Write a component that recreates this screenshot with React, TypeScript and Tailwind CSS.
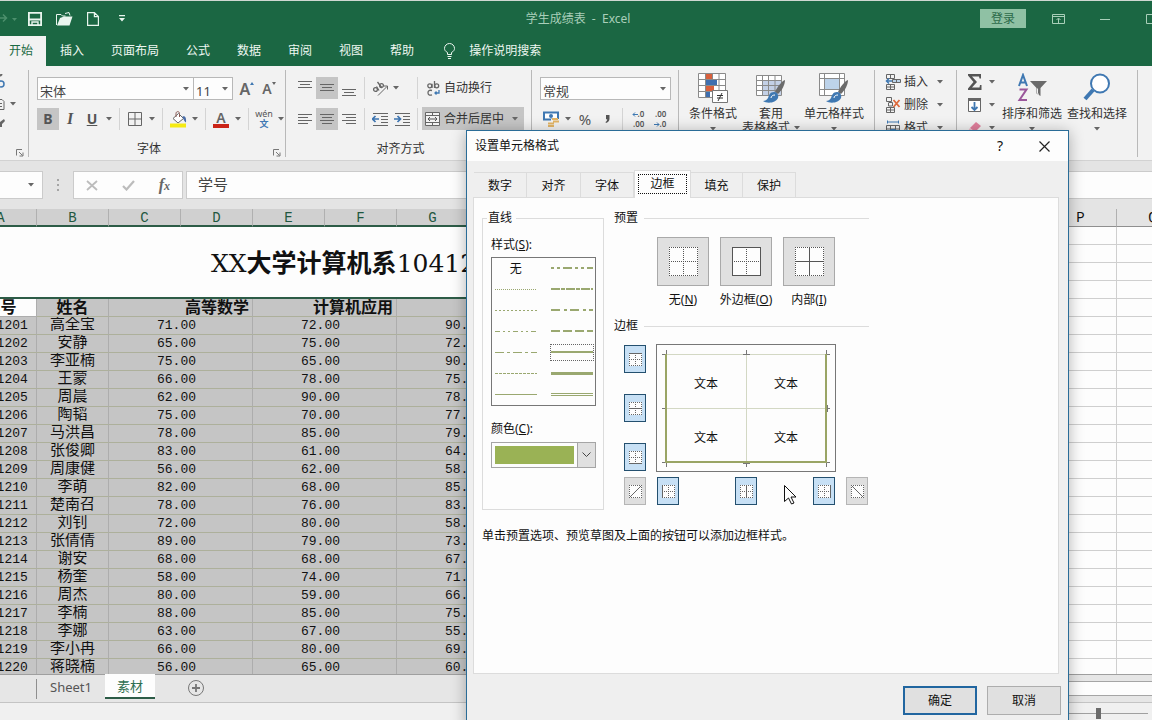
import React from 'react';

const UI_FONT = "font-['Noto_Sans','Noto_Sans_CJK_SC',sans-serif]";

const menuTabs = ['插入', '页面布局', '公式', '数据', '审阅', '视图', '帮助'];
const columns = ['A', 'B', 'C', 'D', 'E', 'F', 'G'];

const students = [
  ['1041201', '高全宝', '71.00', '72.00', '90.00'],
  ['1041202', '安静', '65.00', '75.00', '72.00'],
  ['1041203', '李亚楠', '75.00', '65.00', '90.00'],
  ['1041204', '王蒙', '66.00', '78.00', '75.00'],
  ['1041205', '周晨', '62.00', '90.00', '78.00'],
  ['1041206', '陶韬', '75.00', '70.00', '77.00'],
  ['1041207', '马洪昌', '78.00', '85.00', '79.00'],
  ['1041208', '张俊卿', '83.00', '61.00', '64.00'],
  ['1041209', '周康健', '56.00', '62.00', '58.00'],
  ['1041210', '李萌', '82.00', '68.00', '85.00'],
  ['1041211', '楚南召', '78.00', '76.00', '83.00'],
  ['1041212', '刘钊', '72.00', '80.00', '58.00'],
  ['1041213', '张倩倩', '89.00', '79.00', '73.00'],
  ['1041214', '谢安', '68.00', '68.00', '67.00'],
  ['1041215', '杨奎', '58.00', '74.00', '71.00'],
  ['1041216', '周杰', '80.00', '59.00', '66.00'],
  ['1041217', '李楠', '88.00', '85.00', '75.00'],
  ['1041218', '李娜', '63.00', '67.00', '55.00'],
  ['1041219', '李小冉', '66.00', '80.00', '69.00'],
  ['1041220', '蒋晓楠', '56.00', '65.00', '60.00'],
];

function Caret() {
  return (
    <svg width="6" height="4" viewBox="0 0 6 4" className="shrink-0">
      <path d="M0 0h6L3 3.5z" fill="#666" />
    </svg>
  );
}

function CaretButton({ label }: { label: string }) {
  return (
    <button aria-label={label} className="flex h-[22px] w-3 shrink-0 items-center justify-center">
      <Caret />
    </button>
  );
}

function Tool({ label, active, children }: { label: string; active?: boolean; children: React.ReactNode }) {
  return (
    <button
      aria-label={label}
      className={`flex h-[22px] w-[22px] shrink-0 items-center justify-center ${active ? 'bg-[#c5c5c5]' : ''}`}
    >
      {children}
    </button>
  );
}

function Divider() {
  return <div className="mx-1 h-[22px] w-px shrink-0 bg-[#d4d4d4]" />;
}

function Combo({ label, value, className }: { label: string; value: string; className: string }) {
  return (
    <div className={`relative h-[23px] shrink-0 border border-[#b8b8b8] bg-[#fdfdfd] ${className}`}>
      <select aria-label={label} className="h-full w-full appearance-none bg-transparent pb-1 pl-0.5 text-[13px] leading-4 text-[#444] outline-none">
        <option>{value}</option>
      </select>
      <span className="pointer-events-none absolute inset-y-0 right-1 flex items-center">
        <Caret />
      </span>
    </div>
  );
}

function Group({ label, launcher, className, children }: {
  label?: string;
  launcher?: boolean;
  className: string;
  children: React.ReactNode;
}) {
  return (
    <div className={`flex shrink-0 flex-col border-r border-[#b9b9b9] ${className}`}>
      {children}
      <div className="relative mt-auto h-4 pr-6 text-center text-xs leading-4 text-[#333]">
        {label}
        {launcher && (
          <button aria-label="更多设置" className="absolute right-1 bottom-0">
            <svg width="8" height="8" viewBox="0 0 8 8" fill="none" stroke="#777">
              <path d="M.5 6.5V.5H6M3 3l3.5 3.5M7 3.5V7H3.5" />
            </svg>
          </button>
        )}
      </div>
    </div>
  );
}

// Horizontal strokes for the alignment buttons, [x, y, width] each
function Lines({ rows }: { rows: number[][] }) {
  return (
    <svg width="16" height="16" viewBox="0 0 16 16" fill="#666">
      {rows.map(([x, y, w]) => (
        <rect key={y} x={x} y={y} width={w} height="1" />
      ))}
    </svg>
  );
}

function Indent({ right }: { right?: boolean }) {
  return (
    <svg width="17" height="14" viewBox="0 0 17 14" fill="none">
      <path d="M1 1.5h15M9 4.5h7M9 7.5h7M9 10.5h7M1 13.5h15" stroke="#666" />
      <path d={right ? 'M0 7h6M3.5 4l3 3-3 3' : 'M7 7H1M3.5 4l-3 3 3 3'} stroke="#3d74b0" strokeWidth="1.7" />
    </svg>
  );
}

function BigTool({ lines, caret = true, className, children }: {
  lines: string[];
  caret?: boolean;
  className: string;
  children: React.ReactNode;
}) {
  return (
    <button className={`flex shrink-0 flex-col items-center text-xs leading-[14px] whitespace-nowrap text-[#333] ${className}`}>
      <span className="mb-1 block h-[30px]">{children}</span>
      {lines.map((line, i) => (
        <span key={line} className="flex items-center gap-1">
          {line}
          {i === 1 && <Caret />}
        </span>
      ))}
      {caret && <span className="mt-1.5"><Caret /></span>}
    </button>
  );
}

function BrushMark() {
  return (
    <>
      <path d="M29 7c-3 1-8 7-10 12l3 2c4-4 7-9 7-14z" fill="#6b6b6b" />
      <path d="M18 19c-4 0-5 3-6 6-1 2-3 3-5 3 4 3 13 2 15-3 1-3-1-6-4-6z" fill="#3f78b2" />
      <path d="M15 25c0-2 2-3 4-3" stroke="#fff" fill="none" />
    </>
  );
}

function CellTool({ label, kind }: { label: string; kind: 'insert' | 'delete' | 'format' }) {
  return (
    <div className="flex h-[23px] items-center">
      <button className="flex items-center gap-[3px] text-xs leading-4 text-[#333]">
        <svg width="16" height="16" viewBox="0 0 16 16" fill="none">
          {kind === 'insert' && (
            <>
              <path d="M1.5.5h8v4h-8zM5.5.5v4M1.5 10.5h8v5h-8zM5.5 10.5v5M1.5 13h8" stroke="#666" />
              <path d="M7.5 5.5h8v3h-8zM11.5 5.5v3" stroke="#666" fill="#bcd4ea" />
              <path d="M7 7H2M4 4.5L1.5 7 4 9.5" stroke="#3f78b2" strokeWidth="1.5" />
            </>
          )}
          {kind === 'delete' && (
            <>
              <path d="M1.5.5h5v4h-5zM1.5 10.5h8v5h-8zM5.5 10.5v5M1.5 13h8M3.5 6v3h4V5.5h-4" stroke="#666" />
              <path d="M8.5 3l6 7M14.5 3l-6 7" stroke="#dd6b3d" strokeWidth="1.8" />
            </>
          )}
          {kind === 'format' && (
            <>
              <path d="M1.5 5.5h13v10h-13zM1.5 9h13M1.5 12.5h13M5.5 5.5v10M10.5 5.5v10" stroke="#666" />
              <path d="M5.5 9h5v3.5h-5z" fill="#3f78b2" />
              <path d="M2.5 2h11M2.5.5v3M13.5.5v3" stroke="#3f78b2" />
            </>
          )}
        </svg>
        {label}
      </button>
      <span className="ml-1.5 flex"><CaretButton label={`${label}选项`} /></span>
    </div>
  );
}

function TitleBar() {
  return (
    <header className="flex h-9 items-center overflow-hidden border-t border-[#cfd8d2] text-xs text-[#a9cfb9]">
      <div className="flex flex-1 items-center">
        <svg width="18" height="14" viewBox="0 0 18 14" className="mr-[10px]">
          <path d="M0 6h6M3 2.5L6.5 6 3 9.5" fill="none" stroke="#4c8f6c" strokeWidth="1.5" />
          <path d="M12 6h5l-2.5 3z" fill="#4c8f6c" />
        </svg>
        <button aria-label="保存">
          <svg width="14" height="14" viewBox="0 0 14 14" fill="none" stroke="#e9f5ee" strokeWidth="1.8">
            <path d="M.9.9h12.2v12.2H.9zM1 7.5h12" />
            <path d="M4 13V10h6v3" strokeWidth="1.4" />
          </svg>
        </button>
        <button aria-label="打开" className="ml-[14px]">
          <svg width="17" height="14" viewBox="0 0 17 14" fill="#e9f5ee">
            <path d="M.5 13V2.5H5l1.500 1.500h3M9 1.500l4-1 1 3" fill="none" stroke="#e9f5ee" />
            <path d="M1 13.500L4 6l4-1.500h8.500L13.500 13.500z" />
          </svg>
        </button>
        <button aria-label="新建" className="ml-[14px]">
          <svg width="12" height="14" viewBox="0 0 12 14" fill="none" stroke="#e9f5ee" strokeWidth="1.2">
            <path d="M.6.6h6.800l4 4v8.800H.6zM7.400.6v4h4" />
          </svg>
        </button>
        <button aria-label="自定义快速访问工具栏" className="ml-5">
          <svg width="6" height="7" viewBox="0 0 6 7" fill="#e9f5ee">
            <path d="M0 0h6v1.300H0zM0 3h6L3 6.500z" />
          </svg>
        </button>
      </div>
      <h1 className="whitespace-pre">学生成绩表  -  Excel</h1>
      <div className="-mr-1 flex flex-1 items-center justify-end">
        <button className="h-[19px] w-[46px] bg-[#8fc1a4] text-xs leading-[19px] text-[#2c6a4a]">登录</button>
        <button aria-label="功能区显示选项" className="ml-[26px]">
          <svg width="13" height="10" viewBox="0 0 13 10" fill="none" stroke="#a9cfb9">
            <path d="M.5.5h12v9H.5zM.5 2.500h12M6.500 9V4.500M4.500 6l2-2 2 2" />
          </svg>
        </button>
        <button aria-label="最小化" className="ml-[35px]">
          <svg width="10" height="10" viewBox="0 0 10 10"><path d="M0 5h10v1H0z" fill="#a9cfb9" /></svg>
        </button>
        <button aria-label="最大化" className="ml-9">
          <svg width="10" height="10" viewBox="0 0 10 10"><path d="M.5.5h9v9h-9z" fill="none" stroke="#a9cfb9" /></svg>
        </button>
      </div>
    </header>
  );
}

function MenuBar() {
  return (
    <nav className="flex h-[30px] items-stretch text-xs whitespace-nowrap text-[#eef7f1]">
      <button className="bg-[#f2f2f2] pr-[13px] pl-[9px] text-[#1b6a43]">开始</button>
      <div className="ml-[14px] flex gap-[27px]">
        {menuTabs.map((tab) => (
          <button key={tab}>{tab}</button>
        ))}
      </div>
      <button className="ml-[29px] flex items-center gap-[13px]">
        <svg width="13" height="16" viewBox="0 0 13 16" fill="none" stroke="#eef7f1">
          <path d="M4.5 11.500v-2C2.500 8.500 1.500 7 1.500 5.500a5 5 0 0110 0c0 1.500-1 3-3 4v2zM4.500 13.500h4M5 15.500h3" />
        </svg>
        操作说明搜索
      </button>
    </nav>
  );
}

function Ribbon() {
  return (
    <div className="flex h-[95px] overflow-hidden border-b border-[#d2d2d2] bg-[#f2f2f2] pt-1 pb-[3px] text-[#333]">
      <Group launcher className="w-[29px]">
        <svg width="20" height="56" viewBox="0 0 20 56" fill="none" className="mt-1">
          <path d="M0 2l2-2" stroke="#666" strokeWidth="2" />
          <circle cx="1" cy="10" r="3" stroke="#3f78b2" strokeWidth="1.5" />
          <path d="M0 25.500h2l2 2v8H0M0 29.500h2M0 32.500h2" stroke="#666" />
          <path d="M10 28h6l-3 3.500z" fill="#666" />
          <path d="M0 48l4-3 1 2-3 3v3H0z" fill="#666" />
        </svg>
      </Group>

      <Group label="字体" launcher className="w-[257px] pl-2">
        <div className="mt-[7px] flex items-center">
          <Combo label="字体" value="宋体" className="w-[157px]" />
          <Combo label="字号" value="11" className="-ml-px mr-[3px] w-10" />
          <Tool label="增大字号">
            <span className="text-base leading-4 font-semibold text-[#666]">A</span>
            <svg width="4" height="14" viewBox="0 0 4 14"><path d="M0 3h4L2 0z" fill="#3f78b2" /></svg>
          </Tool>
          <Tool label="减小字号">
            <span className="text-sm leading-4 font-semibold text-[#666]">A</span>
            <svg width="4" height="14" viewBox="0 0 4 14"><path d="M0 0h4L2 3z" fill="#666" /></svg>
          </Tool>
        </div>
        <div className="mt-2 flex items-center">
          <Tool label="加粗" active><b className="text-sm text-[#555]">B</b></Tool>
          <Tool label="倾斜"><i className="font-['Liberation_Serif',serif] text-base font-bold text-[#555]">I</i></Tool>
          <Tool label="下划线"><span className="text-sm font-bold text-[#555] underline">U</span></Tool>
          <CaretButton label="下划线选项" />
          <Divider />
          <Tool label="边框">
            <svg width="14" height="14" viewBox="0 0 14 14" fill="none" stroke="#666">
              <path d="M.5.5h13v13H.5zM7 .5v13M.5 7h13" />
            </svg>
          </Tool>
          <CaretButton label="边框选项" />
          <Divider />
          <Tool label="填充颜色">
            <svg width="17" height="17" viewBox="0 0 17 17" fill="none">
              <path d="M8.500 2.500l5 5L8 12 3 7.500z" fill="#fff" stroke="#666" />
              <path d="M6 6V2.500C6 0 9.500 0 9.500 2.500V6" stroke="#8a5a55" />
              <path d="M12.500 5.500c3-1 4 2 3.500 6-1.500-.5-2-3-3-4z" fill="#4a6da8" />
              <path d="M0 12.500h16v4H0z" fill="#f5ea12" />
            </svg>
          </Tool>
          <CaretButton label="填充颜色选项" />
          <Divider />
          <Tool label="字体颜色">
            <span className="flex flex-col items-center">
              <span className="text-sm leading-[13px] font-semibold text-[#666]">A</span>
              <span className="h-1 w-4 bg-[#cb2417]" />
            </span>
          </Tool>
          <CaretButton label="字体颜色选项" />
          <Divider />
          <Tool label="拼音">
            <span className="flex flex-col items-center leading-[10px]">
              <span className="text-[9px] text-[#555]">wén</span>
              <span className="text-[9px] font-bold text-[#3f78b2]">文</span>
            </span>
          </Tool>
          <CaretButton label="拼音选项" />
        </div>
      </Group>

      <Group label="对齐方式" className="w-[246px] pl-2">
        <div className="mt-[7px] flex items-center">
          <Tool label="顶端对齐"><Lines rows={[[1, 1, 14], [3, 4, 10], [1, 7, 14]]} /></Tool>
          <Tool label="垂直居中" active><Lines rows={[[1, 4, 14], [3, 7, 10], [1, 10, 14]]} /></Tool>
          <Tool label="底端对齐"><Lines rows={[[1, 9, 14], [3, 12, 10], [1, 15, 14]]} /></Tool>
          <Divider />
          <button aria-label="方向" className="flex h-[22px] w-11 items-center gap-1 pl-[3px]">
            <svg width="17" height="15" viewBox="0 0 17 15" fill="none" stroke="#666">
              <circle cx="3.500" cy="8.500" r="1.900" strokeWidth="1.300" />
              <path d="M4.500 5.500l2.500 4M5.500 1l4.500 6" strokeWidth="1.300" />
              <circle cx="9.500" cy="4.500" r="1.900" strokeWidth="1.300" />
              <path d="M6 14.500l9-9M12 5h3.500v3.500" />
            </svg>
            <Caret />
          </button>
          <Divider />
          <button className="flex h-[22px] w-[102px] items-center gap-1 pl-[5px] text-xs">
            <svg width="13" height="15" viewBox="0 0 13 15" fill="none" stroke="#666" strokeWidth="1.3">
              <circle cx="2.800" cy="4.800" r="2" />
              <path d="M5 2.800V7M7.500 0v7" />
              <circle cx="9.700" cy="4.800" r="2" />
              <path d="M5 9.500c-3-.8-4 .5-4 2.200s1 3 4 2.200" />
              <path d="M12 9v3H8M9.500 10.500L8 12l1.500 1.500" stroke="#3f78b2" />
            </svg>
            自动换行
          </button>
        </div>
        <div className="mt-2 flex items-center">
          <Tool label="左对齐"><Lines rows={[[1, 3, 14], [1, 6, 10], [1, 9, 14], [1, 12, 10]]} /></Tool>
          <Tool label="居中" active><Lines rows={[[1, 3, 14], [3, 6, 10], [1, 9, 14], [3, 12, 10]]} /></Tool>
          <Tool label="右对齐"><Lines rows={[[1, 3, 14], [5, 6, 10], [1, 9, 14], [5, 12, 10]]} /></Tool>
          <Divider />
          <Tool label="减少缩进量"><Indent /></Tool>
          <Tool label="增加缩进量"><Indent right /></Tool>
          <Divider />
          <button className="flex h-[23px] w-[102px] items-center gap-1 bg-[#c5c5c5] pl-[3px] text-xs">
            <svg width="15" height="14" viewBox="0 0 15 14" fill="none" stroke="#666">
              <path d="M.5.5h14v13H.5z" fill="#f2f2f2" />
              <path d="M.5 3.500h14M.5 10.500h14M7.500.5v3M7.500 10.500v3" />
              <path d="M3 7h9M5 5L3 7l2 2M10 5l2 2-2 2" stroke="#555" />
            </svg>
            合并后居中
            <span className="ml-1"><Caret /></span>
          </button>
        </div>
      </Group>

      <Group className="w-[147px] pl-2">
        <div className="mt-[7px] flex">
          <Combo label="数字格式" value="常规" className="w-[131px]" />
        </div>
        <div className="mt-2 flex items-center">
          <Tool label="会计数字格式">
            <svg width="17" height="16" viewBox="0 0 17 16" fill="none">
              <path d="M1 1.500h14v7H1z" fill="#fff" stroke="#3f78b2" strokeWidth="2" />
              <circle cx="8" cy="5" r="2" fill="#3f78b2" />
              <path d="M8 9.500h8M10 12h6M5 14.500h8" stroke="#f2f2f2" strokeWidth="3" />
              <path d="M9 8h6M10 10.500h6M5 12.500h6M5 15h6" stroke="#e3b566" strokeWidth="1.800" />
            </svg>
          </Tool>
          <CaretButton label="会计格式选项" />
          <Tool label="百分比"><span className="text-[15px] text-[#555]">%</span></Tool>
          <Tool label="千位分隔">
            <svg width="5" height="8" viewBox="0 0 5 8"><path d="M1 0h3.500v3.500C4.500 5.500 3.500 7 1 8l-.5-1c1.200-.8 1.700-1.500 1.700-2.800H1z" fill="#555" /></svg>
          </Tool>
          <Divider />
          <Tool label="增加小数位数">
            <span className="flex flex-col text-right text-[8px] leading-[10px] font-semibold text-[#555]">
              <span className="flex items-center">
                <svg width="6" height="5" viewBox="0 0 6 5"><path d="M6 2.500H1M3 .5l-2 2 2 2" fill="none" stroke="#3f78b2" /></svg>
                .0
              </span>
              <span>.00</span>
            </span>
          </Tool>
          <Tool label="减少小数位数">
            <span className="flex flex-col text-right text-[8px] leading-[10px] font-semibold text-[#555]">
              <span>.00</span>
              <span className="flex items-center">
                <svg width="6" height="5" viewBox="0 0 6 5"><path d="M0 2.500h5M3 .5l2 2-2 2" fill="none" stroke="#3f78b2" /></svg>
                .0
              </span>
            </span>
          </Tool>
        </div>
      </Group>

      <Group className="w-[196px] pl-2">
        <div className="mt-[3px] flex h-[62px] items-start">
          <BigTool lines={['条件格式']} className="w-[52px]">
            <svg width="30" height="30" viewBox="0 0 30 30" fill="none">
              <path d="M.5.5h27v24H.5z" fill="#fff" />
              <path d="M.5.5h27v24H.5zM.5 6.500h27M.5 12.500h27M.5 18.500h27M7.500.5v24M14.500.5v24M21 .5v24" stroke="#8a8a8a" />
              <path d="M8 1h6v5H8zM8 13h8v5H8z" fill="#d9603c" />
              <path d="M8 7h11v5H8zM8 19h4v5H8z" fill="#3f6faf" />
              <path d="M14.500 17.500h15v12h-15z" fill="#fff" stroke="#777" />
              <path d="M19 22.500h6M19 25h6M24 20l-4 8" stroke="#333" />
            </svg>
          </BigTool>
          <BigTool lines={['套用', '表格格式']} caret={false} className="w-[64px]">
            <svg width="30" height="30" viewBox="0 0 30 30" fill="none">
              <path d="M.5 2.500h25v20H.5z" fill="#fff" />
              <path d="M7 7h18v15H7z" fill="#c3d0e6" />
              <path d="M.5 2.500h25v20H.5zM.5 7.500h25M.5 12.500h25M.5 17.500h25M6.500 2.500v20M12.500 2.500v20M19 2.500v20" stroke="#8a8a8a" />
              <BrushMark />
            </svg>
          </BigTool>
          <BigTool lines={['单元格样式']} className="w-[62px]">
            <svg width="30" height="30" viewBox="0 0 30 30" fill="none">
              <path d="M.5.5h25v22H.5z" fill="#fff" stroke="#8a8a8a" />
              <path d="M.5 5.500h25M.5 16.500h25M5.500.5v22M20.500.5v22" stroke="#8a8a8a" />
              <path d="M6 6h14v10H6z" fill="#bdd3ea" />
              <BrushMark />
            </svg>
          </BigTool>
        </div>
      </Group>

      <Group className="w-[82px] pl-[10px]">
        <CellTool label="插入" kind="insert" />
        <CellTool label="删除" kind="delete" />
        <CellTool label="格式" kind="format" />
      </Group>

      <Group className="w-[181px] pl-[10px]">
        <div className="flex">
          <div className="w-[33px]">
            <div className="flex h-[23px] items-center gap-[3px]">
              <svg width="16" height="16" viewBox="0 0 16 16" className="shrink-0">
                <path d="M1 0h13v4.500h-1.500L12 2.500H5l5 5.500-5 5.500h7.500l.5-2.500h1.500v5H1v-1.500L6.500 8 1 1.500z" fill="#555" />
              </svg>
              <CaretButton label="自动求和选项" />
            </div>
            <div className="flex h-[23px] items-center gap-[3px]">
              <svg width="16" height="16" viewBox="0 0 16 16" fill="none" className="shrink-0">
                <path d="M1.500 1.500h12v13h-12z" fill="#fff" stroke="#666" />
                <path d="M1 1h13v3H1z" fill="#666" />
                <path d="M7.500 5v8M4.500 10l3 3 3-3" stroke="#3f78b2" strokeWidth="1.8" />
              </svg>
              <CaretButton label="填充选项" />
            </div>
            <div className="flex h-[23px] items-center gap-[3px]">
              <svg width="16" height="16" viewBox="0 0 16 16" className="shrink-0">
                <path d="M9 2l5 4-6 6-5-4z" fill="#e07f9c" />
                <path d="M3 8l5 4-1 1H3l-2-2z" fill="#f3bccb" />
              </svg>
              <CaretButton label="清除选项" />
            </div>
          </div>
          <div className="mt-[3px] flex h-[62px] items-start">
            <BigTool lines={['排序和筛选']} className="w-16">
              <svg width="30" height="30" viewBox="0 0 30 30" fill="none">
                <path d="M2 13L6 2l4 11M3.500 9.500h5" stroke="#3f78b2" strokeWidth="2" />
                <path d="M2.500 16.500h7L2.500 27H10" stroke="#9a569b" strokeWidth="2" />
                <path d="M13 8h17l-6.500 7v8l-4-2.500V15z" fill="#6b6b6b" />
                <path d="M20.500 15.500v5l1.500 1" stroke="#f2f2f2" />
              </svg>
            </BigTool>
            <BigTool lines={['查找和选择']} className="w-[66px]">
              <svg width="30" height="30" viewBox="0 0 30 30" fill="none" stroke="#3f78b2">
                <path d="M11 17L3 26" strokeWidth="4" />
                <circle cx="18" cy="10.500" r="9" fill="#fff" strokeWidth="2" />
              </svg>
            </BigTool>
          </div>
        </div>
      </Group>
    </div>
  );
}

function FormulaBar() {
  return (
    <div className="flex h-12 items-center bg-[#e4e4e4]">
      <div className="flex h-7 w-[43px] items-center justify-end border border-l-0 border-[#cbcbcb] bg-[#fdfdfd] pr-2">
        <button aria-label="名称框"><Caret /></button>
      </div>
      <svg width="30" height="12" viewBox="0 0 30 12" fill="#a5a5a5">
        <path d="M14 0h2v2h-2zM14 5h2v2h-2zM14 10h2v2h-2z" />
      </svg>
      <div className="flex h-7 w-[110px] items-center justify-around border border-[#cbcbcb] bg-[#fdfdfd]">
        <button aria-label="取消输入">
          <svg width="12" height="11" viewBox="0 0 12 11"><path d="M1 1l10 9M11 1L1 10" stroke="#bcbcbc" strokeWidth="1.8" /></svg>
        </button>
        <button aria-label="输入">
          <svg width="13" height="11" viewBox="0 0 13 11"><path d="M1 6l3.500 3.500L12 1" fill="none" stroke="#bcbcbc" strokeWidth="2.2" /></svg>
        </button>
        <button aria-label="插入函数" className="font-['Liberation_Serif',serif] text-base leading-5 font-bold text-[#666] italic">
          f<span className="text-xs">x</span>
        </button>
      </div>
      <input
        aria-label="编辑栏"
        defaultValue="学号"
        className="ml-[3px] h-7 min-w-0 flex-1 border border-r-0 border-[#cbcbcb] bg-[#fdfdfd] pb-1 pl-[11px] text-[15px] text-[#444] outline-none"
      />
    </div>
  );
}

const cell = 'h-[18px] overflow-hidden border-r border-b border-r-[#adadad] border-b-[#adb09b] bg-[#c5c5c5] p-0 whitespace-nowrap';

function Sheet() {
  return (
    <div className="min-h-0 flex-1 overflow-hidden bg-[#fdfdfd] text-[#111]">
      <div className="-ml-[35px] flex h-[18px] font-['Liberation_Mono',monospace] text-sm leading-[18px]">
        {columns.map((c) => (
          <div key={c} className="w-[72px] shrink-0 border-r border-b-2 border-r-[#b0b0b0] border-b-[#2d5c47] bg-[#d0d0d0] text-center text-[#1f5740]">
            {c}
          </div>
        ))}
        <div className="w-[576px] shrink-0 border-b-2 border-[#2d5c47] bg-[#d0d0d0]" />
        {['P', 'Q'].map((c) => (
          <div key={c} className="w-[72px] shrink-0 border-r border-b border-r-[#b0b0b0] border-b-[#8f8f8f] bg-[#e4e4e4] text-center">
            {c}
          </div>
        ))}
        <div className="flex-1 border-b border-[#8f8f8f] bg-[#e4e4e4]" />
      </div>
      <div className="-ml-[35px] flex items-start">
        <table className="w-[1080px] shrink-0 table-fixed border-separate border-spacing-0 leading-[17px]">
          <thead>
            <tr>
              <th colSpan={15} className="h-[72px] border-b-2 border-[#2d5c47] bg-[#fdfdfd] p-0 pt-1 pl-[246px] text-left font-['DejaVu_Serif','Noto_Sans_CJK_SC',serif] text-[25px] leading-8 font-bold">
                <span className="font-normal">XX</span>大学计算机系<span className="font-normal">10412</span>
              </th>
            </tr>
            <tr className="text-[16px]">
              <th className="h-[18px] border-r border-b border-[#adadad] bg-[#fdfdfd] p-0">学号</th>
              <th className={cell}>姓名</th>
              <th colSpan={2} className={`${cell} pr-[3px] text-right`}>高等数学</th>
              <th colSpan={2} className={`${cell} pr-[3px] text-right`}>计算机应用</th>
              <th colSpan={2} className={cell} />
              <th colSpan={7} className={cell} />
            </tr>
          </thead>
          <tbody className="text-center font-['Liberation_Mono','Noto_Sans_CJK_SC',monospace] text-[13px]">
            {students.map(([id, name, math, app, extra]) => (
              <tr key={id}>
                <td className={cell}>{id}</td>
                <td className={`${cell} text-[15px]`}>{name}</td>
                <td colSpan={2} className={`${cell} pr-2`}>{math}</td>
                <td colSpan={2} className={`${cell} pr-2`}>{app}</td>
                <td colSpan={2} className={`${cell} pr-2`}>{extra}</td>
                <td colSpan={7} className={cell} />
              </tr>
            ))}
          </tbody>
        </table>
        <div className="flex-1">
          {Array.from({ length: 26 }, (_, i) => (
            <div key={i} className="flex h-[18px] border-b border-[#cfcfcf]">
              <div className="w-[72px] shrink-0 border-r border-[#cfcfcf]" />
            </div>
          ))}
        </div>
      </div>
    </div>
  );
}

function SheetTabs() {
  return (
    <div className="flex h-7 shrink-0 items-start border-t border-[#9f9f9f] bg-[#e6e6e6]">
      <div className="mt-1 ml-9 h-5 w-px bg-[#8f8f8f]" />
      <button className="h-6 w-[68px] text-[13px] leading-6 text-[#555]">Sheet1</button>
      <button className="-mt-px h-[25px] w-[50px] border-b-2 border-[#2d5c47] bg-[#fdfdfd] text-[13px] leading-[22px] text-[#2d6e50]">素材</button>
      <button aria-label="新工作表" className="mt-[5px] ml-[33px]">
        <svg width="16" height="16" viewBox="0 0 16 16" fill="none" stroke="#777">
          <circle cx="8" cy="8" r="7.5" />
          <path d="M8 4v8M4 8h8" strokeWidth="1.8" />
        </svg>
      </button>
      <div className="mt-1.5 ml-auto h-[15px] w-1/2 border-y border-[#a5a5a5] bg-[#fdfdfd]" />
    </div>
  );
}

function StatusBar() {
  return (
    <footer className="flex h-[18px] shrink-0 items-center justify-end border-t border-[#c4c4c4] bg-[#f0f0f0] pt-1 pr-1">
      <input
        type="range"
        aria-label="缩放"
        defaultValue={50}
        className="h-3 w-[100px] appearance-none bg-[linear-gradient(#a0a0a0,#a0a0a0)] bg-[length:100%_1px] bg-center bg-no-repeat [&::-webkit-slider-thumb]:h-[11px] [&::-webkit-slider-thumb]:w-[5px] [&::-webkit-slider-thumb]:appearance-none [&::-webkit-slider-thumb]:bg-[#6b6b6b]"
      />
    </footer>
  );
}

const dialogTabs = [
  { name: '数字', width: 'w-[53px]' },
  { name: '对齐', width: 'w-[54px]' },
  { name: '字体', width: 'w-[53px]' },
  { name: '边框', width: 'w-[57px]' },
  { name: '填充', width: 'w-[52px]' },
  { name: '保护', width: 'w-[53px]' },
];

// Left and right sample of every row, null stands for "no line"
const lineStyles = [
  null, { w: 2, dash: '3 3 3 3 9 3' },
  { w: 1, dash: '1 1' }, { w: 2, dash: '9 1 4 1' },
  { w: 1, dash: '2 2' }, { w: 2, dash: '9 4 3 3' },
  { w: 1, dash: '5 3 2 3 2 3' }, { w: 2, dash: '9 3' },
  { w: 1, dash: '9 3 3 3' }, { w: 2, dash: '', selected: true },
  { w: 1, dash: '3 1' }, { w: 3, dash: '' },
  { w: 1, dash: '' }, { w: 1, dash: '', double: true },
];

function PresetIcon({ kind }: { kind: 'none' | 'outline' | 'inside' }) {
  const outer = kind === 'outline' ? undefined : '1 1';
  const inner = kind === 'inside' ? undefined : '1 1';
  return (
    <svg width="29" height="29" viewBox="0 0 29 29" stroke="#555">
      <path d="M0 0h29v29H0z" fill="#fdfdfd" stroke="none" />
      <path d="M0 .5h29M0 28.5h29M.5 0v29M28.5 0v29" strokeDasharray={outer} />
      <path d="M14.5 0v29M0 14.5h29" strokeDasharray={inner} />
    </svg>
  );
}

function Preset({ label, mnemonic, kind }: { label: string; mnemonic: string; kind: 'none' | 'outline' | 'inside' }) {
  return (
    <label className="flex w-[52px] flex-col items-center whitespace-nowrap">
      <button className="flex h-[49px] w-full items-center justify-center border border-[#a9a9a9] bg-[#e0e0e0]">
        <PresetIcon kind={kind} />
      </button>
      <span className="mt-[5px]">{label}(<u>{mnemonic}</u>)</span>
    </label>
  );
}

function EdgeButton({ label, line, disabled }: { label: string; line: string; disabled?: boolean }) {
  return (
    <button
      aria-label={label}
      className={`flex h-7 w-[22px] items-center justify-center border ${disabled ? 'border-[#b5b5b5] bg-[#dfdfdf]' : 'border-[#24506f] bg-[#c7e0f5]'}`}
    >
      <svg width="13" height="13" viewBox="0 0 13 13" fill="none" stroke="#666">
        <path d="M0 0h13v13H0z" fill="#fdfdfd" stroke="none" />
        <path d="M0 .5h13M0 12.5h13M.5 0v13M12.5 0v13" strokeDasharray="1 1" />
        {!disabled && <path d="M6.5 0v13M0 6.5h13" strokeDasharray="1 1" />}
        <path d={line} />
      </svg>
    </button>
  );
}

function SectionHead({ title }: { title: string }) {
  return (
    <h3 className="flex items-center gap-1.5">
      {title}
      <span className="h-px flex-1 bg-[#dcdcdc]" />
    </h3>
  );
}

function BorderPreview() {
  return (
    <div className="relative h-32 w-[180px] border border-[#777] bg-[#fdfdfd]">
      <svg width="178" height="126" viewBox="0 0 178 126" fill="none" className="absolute inset-0">
        <path d="M9 9.500h160M9 63.500h160M89.500 9v108" stroke="#d3d8c4" />
        <path d="M5 9.500h5M9.500 5v5M168 9.500h5M169.500 5v5M89.500 5v4M86 9.500h7M5 63.500h4M169 63.500h4M170.500 60v7M5 117.500h5M9.500 117v5M168 117.500h5M169.500 117v5M89.500 118v4M86 118.500h7" stroke="#777" />
        <path d="M9 9v108M169 9v108M8 117h162" stroke="#9aa565" strokeWidth="2" />
      </svg>
      <div className="relative grid h-full grid-cols-2 place-items-center px-[9px] pt-3 pb-1.5">
        <span>文本</span>
        <span>文本</span>
        <span>文本</span>
        <span>文本</span>
      </div>
    </div>
  );
}

function FormatCellsDialog() {
  return (
    <section
      role="dialog"
      aria-label="设置单元格格式"
      className="absolute top-[130px] left-[466px] w-[603px] border border-[#2a6c97] bg-[#efefef] pb-3 text-xs leading-[18px] text-[#111] shadow-[0_2px_14px_rgba(0,0,0,0.3)]"
    >
      <div className="flex h-[30px] items-center bg-[#fdfdfd] pl-2">
        <h2 className="flex-1">设置单元格格式</h2>
        <button aria-label="帮助" className="w-5 text-sm">?</button>
        <button aria-label="关闭" className="mr-[18px] ml-[29px]">
          <svg width="11" height="11" viewBox="0 0 11 11"><path d="M.5.5l10 10M10.500.5l-10 10" stroke="#222" strokeWidth="1.2" /></svg>
        </button>
      </div>

      <div className="pr-[9px] pl-1.5">
        <div role="tablist" className="flex h-9 items-end pl-px">
          {dialogTabs.map((tab) =>
            tab.name === '边框' ? (
              <button key={tab.name} role="tab" aria-selected="true" className={`relative -mb-px h-7 border border-b-0 border-[#dcdcdc] bg-[#fdfdfd] p-[3px] pb-1 ${tab.width}`}>
                <span className="flex h-full items-center justify-center border border-dotted border-[#111]">{tab.name}</span>
              </button>
            ) : (
              <button key={tab.name} role="tab" className={`h-[25px] border-t border-r border-[#dcdcdc] pt-px ${tab.width}`}>{tab.name}</button>
            )
          )}
        </div>

        <div className="min-h-[477px] border border-[#dcdcdc] bg-[#fdfdfd] pt-[11px] pl-2">
          <div className="flex gap-[10px]">
            <fieldset className="h-[301px] w-[122px] border border-[#dcdcdc] pl-2">
              <legend className="-ml-1 pr-1 pl-px">直线</legend>
              <div id="line-style" className="mt-[9px]">样式(<u>S</u>):</div>
              <div role="listbox" aria-labelledby="line-style" className="mt-[3px] grid h-[149px] w-[105px] grid-cols-2 border border-[#777]">
                {lineStyles.map((s, i) => (
                  <button
                    key={i}
                    role="option"
                    aria-selected={!!s?.selected}
                    aria-label={s ? `线型 ${i}` : undefined}
                    className={`flex h-[21px] items-center ${!s ? 'justify-center pr-1' : i % 2 ? 'justify-end pr-px' : 'pl-0.5'}`}
                  >
                    {!s && '无'}
                    {s && (
                      <span className={`flex h-[17px] w-11 items-center justify-center border border-dotted ${s.selected ? 'border-[#666]' : 'border-transparent'}`}>
                        <svg width="42" height="5" viewBox="0 0 42 5" stroke="#9aa870">
                          {s.double
                            ? <path d="M0 1.500h42M0 3.500h42" />
                            : <path d={s.w === 2 ? 'M0 2h42' : 'M0 2.500h42'} strokeWidth={s.w} strokeDasharray={s.dash || undefined} />}
                        </svg>
                      </span>
                    )}
                  </button>
                ))}
              </div>
              <label htmlFor="line-color" className="mt-[14px] block">颜色(<u>C</u>):</label>
              <div className="relative mt-1 flex h-[26px] w-[105px] border border-[#a5a5a5] bg-[#fdfdfd]">
                <select id="line-color" className="m-[3px] flex-1 appearance-none bg-[#9ab255] outline-none">
                  <option value="#9ab255" />
                </select>
                <span className="pointer-events-none flex w-[18px] items-center justify-center border-l border-[#a5a5a5] bg-[#e0e0e0]">
                  <svg width="9" height="6" viewBox="0 0 9 6"><path d="M.5.5l4 4 4-4" fill="none" stroke="#444" /></svg>
                </span>
              </div>
            </fieldset>

            <div className="w-[255px]">
              <SectionHead title="预置" />
              <div className="mt-[10px] flex gap-[11px] pl-[43px]">
                <Preset label="无" mnemonic="N" kind="none" />
                <Preset label="外边框" mnemonic="O" kind="outline" />
                <Preset label="内部" mnemonic="I" kind="inside" />
              </div>
              <div className="mt-2">
                <SectionHead title="边框" />
              </div>
              <div className="mt-[9px] flex gap-[10px] pl-[10px]">
                <div className="flex flex-col justify-between py-px">
                  <EdgeButton label="上边框" line="M0 .5h13" />
                  <EdgeButton label="水平内边框" line="M0 6.5h13" />
                  <EdgeButton label="下边框" line="M0 12.5h13" />
                </div>
                <BorderPreview />
              </div>
              <div className="mt-[5px] flex gap-[11px] pl-[10px]">
                <EdgeButton label="左斜线" line="M1 12L12 1" disabled />
                <div className="flex w-[178px] justify-between">
                  <EdgeButton label="左边框" line="M.5 0v13" />
                  <EdgeButton label="垂直内边框" line="M6.5 0v13" />
                  <EdgeButton label="右边框" line="M12.5 0v13" />
                </div>
                <EdgeButton label="右斜线" line="M1 1l11 11" disabled />
              </div>
            </div>
          </div>
          <p className="mt-[17px]">单击预置选项、预览草图及上面的按钮可以添加边框样式。</p>
        </div>
      </div>

      <div className="mt-3 flex justify-end gap-[10px] pr-[7px]">
        <button className="h-[29px] w-[74px] border-2 border-[#2166a0] bg-[#e0e0e0]">确定</button>
        <button className="h-[29px] w-[74px] border border-[#adadad] bg-[#e0e0e0]">取消</button>
      </div>
    </section>
  );
}

export default function App() {
  return (
    <div className={`relative flex h-screen flex-col overflow-hidden bg-[#1b6743] ${UI_FONT}`}>
      <TitleBar />
      <MenuBar />
      <Ribbon />
      <FormulaBar />
      <Sheet />
      <SheetTabs />
      <StatusBar />
      <FormatCellsDialog />
      {/* Mouse pointer */}
      <svg width="13" height="20" viewBox="0 0 13 20" className="pointer-events-none absolute top-[485px] left-[784px]">
        <path d="M.5.5v16l4-3.500 3 6 2.500-1-3-6h5z" fill="#fff" stroke="#111" />
      </svg>
    </div>
  );
}
